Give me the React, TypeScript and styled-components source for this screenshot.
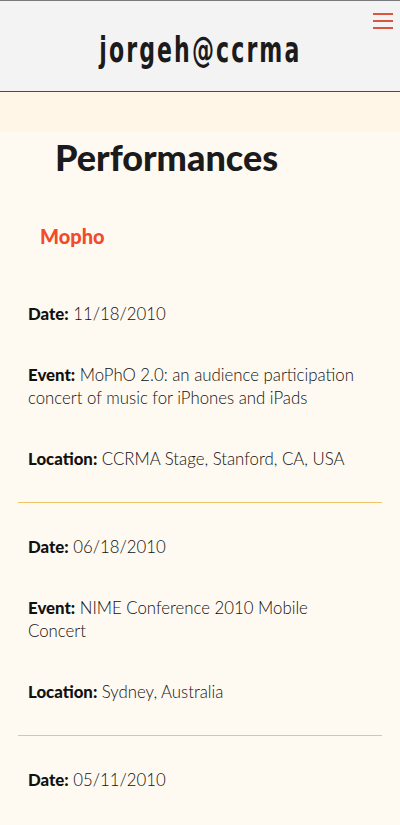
import React from "react";
import styled, { createGlobalStyle } from "styled-components";

const Global = createGlobalStyle`
  html, body { margin: 0; padding: 0; background: #fffaf1; }
  body { font-family: "Lato", "Open Sans", sans-serif; color: #1e1e1e; }
`;

const Header = styled.header`
  position: relative;
  height: 90px;
  background: #f3f3f3;
  border-top: 1px solid #7a7a7a;
  border-bottom: 1px solid #1f5866;
  display: flex;
  align-items: center;
  justify-content: center;
`;

const Brand = styled.h1`
  margin: 0;
  padding-top: 8px;
  font-family: "DejaVu Sans Condensed", "DejaVu Sans", sans-serif;
  font-weight: 700;
  font-size: 35px;
  letter-spacing: 3px;
  color: #1b1b1b;
  transform: scaleX(0.7);
`;

const MenuButton = styled.button`
  position: absolute;
  top: 12px;
  right: 7px;
  width: 20px;
  height: 16px;
  padding: 0;
  border: none;
  background: transparent;
  display: flex;
  flex-direction: column;
  justify-content: space-between;
`;

const MenuBar = styled.span`
  display: block;
  height: 2px;
  width: 20px;
  background: #d9553f;
`;

const Band = styled.div`
  height: 40px;
  background: #fff6e8;
`;

const Main = styled.main`
  padding: 0 18px;
`;

const Title = styled.h2`
  margin: 0;
  padding: 3px 0 0 37px;
  font-family: "Lato", sans-serif;
  font-weight: 900;
  font-size: 36px;
  line-height: 44px;
  color: #1b1b1b;
`;

const Project = styled.h3`
  margin: 0;
  padding: 45px 0 0 22px;
  font-family: "Lato", sans-serif;
  font-weight: 900;
  font-size: 20px;
  line-height: 24px;
  color: #f24a2c;
`;

const List = styled.div`
  padding-top: 22px;
`;

const Item = styled.section`
  padding: 32px 10px 32px;
  display: flex;
  flex-direction: column;
  gap: 38px;
  border-bottom: 1px solid #f0c46a;
`;

const Field = styled.p`
  margin: 0;
  font-family: "Lato", sans-serif;
  font-weight: 300;
  font-size: 16.8px;
  line-height: 23px;
  color: #111;
  max-width: 334px;
`;

const Label = styled.b`
  font-weight: 900;
`;

const performances = [
  {
    date: "11/18/2010",
    event: "MoPhO 2.0: an audience participation concert of music for iPhones and iPads",
    location: "CCRMA Stage, Stanford, CA, USA",
  },
  {
    date: "06/18/2010",
    event: "NIME Conference 2010 Mobile Concert",
    location: "Sydney, Australia",
  },
  {
    date: "05/11/2010",
    event: "Stanford Laptop Orchestra Spring Concert",
    location: "Stanford, CA, USA",
  },
];

export default function App() {
  return (
    <>
      <Global />
      <Header>
        <Brand>jorgeh@ccrma</Brand>
        <MenuButton aria-label="menu">
          <MenuBar />
          <MenuBar />
          <MenuBar />
        </MenuButton>
      </Header>
      <Band />
      <Main>
        <Title>Performances</Title>
        <Project>Mopho</Project>
        <List>
          {performances.map((p) => (
            <Item key={p.date}>
              <Field>
                <Label>Date:</Label> {p.date}
              </Field>
              <Field>
                <Label>Event:</Label> {p.event}
              </Field>
              <Field>
                <Label>Location:</Label> {p.location}
              </Field>
            </Item>
          ))}
        </List>
      </Main>
    </>
  );
}
